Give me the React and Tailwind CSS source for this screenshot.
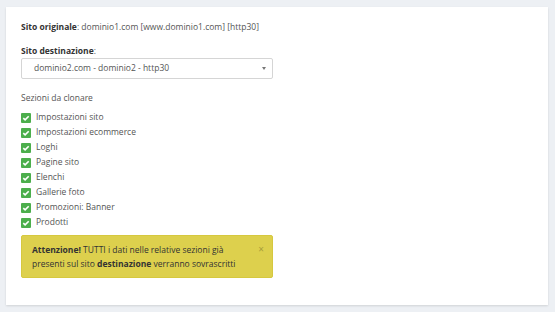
import React from 'react';

const SECTIONS = [
  'Impostazioni sito',
  'Impostazioni ecommerce',
  'Loghi',
  'Pagine sito',
  'Elenchi',
  'Gallerie foto',
  'Promozioni: Banner',
  'Prodotti',
];

function Check() {
  return (
    <span className="w-[10px] h-[10px] bg-[#4cae4c] rounded-[1px] flex items-center justify-center shrink-0">
      <svg width="8" height="8" viewBox="0 0 8 8" fill="none">
        <path d="M1.3 4.1 L3.1 5.8 L6.7 2.2" stroke="white" strokeWidth="1.6" />
      </svg>
    </span>
  );
}

export default function App() {
  return (
    <div className="w-[555px] h-[312px] bg-[#edf0f4] pt-[7px] pl-[6px]" style={{ fontFamily: '"Open Sans", sans-serif' }}>
      <div className="w-[542px] h-[298px] bg-white shadow-[0_1px_2px_rgba(0,0,0,0.12)] pl-[15px] pt-[13px] text-[8.5px] text-[#555]">
        <div className="leading-[14px]">
          <span className="font-bold text-[#333]">Sito originale</span>: dominio1.com [www.dominio1.com] [http30]
        </div>

        <div className="mt-[10px] leading-[14px]">
          <span className="font-bold text-[#333]">Sito destinazione</span>:
        </div>
        <div className="w-[252px] h-[21px] border border-[#d5d5d5] rounded-[2px] flex items-center justify-between pl-[12px] pr-[6px]">
          <span>dominio2.com - dominio2 - http30</span>
          <span className="w-0 h-0 border-l-[2.5px] border-r-[2.5px] border-t-[3px] border-l-transparent border-r-transparent border-t-[#777]" />
        </div>

        <div className="mt-[12px] leading-[14px]">Sezioni da clonare</div>

        <div className="mt-[5px] flex flex-col">
          {SECTIONS.map((s) => (
            <div key={s} className="h-[15px] flex items-center gap-[5px]">
              <Check />
              <span>{s}</span>
            </div>
          ))}
        </div>

        <div className="mt-[5px] w-[252px] h-[43px] bg-[#ddd04d] border border-[#d6c83f] rounded-[2px] pl-[10px] pr-[8px] pt-[7px] flex justify-between text-[#333]">
          <div className="leading-[14px]">
            <span className="font-bold">Attenzione!</span> TUTTI i dati nelle relative sezioni già
            <br />
            presenti sul sito <span className="font-bold">destinazione</span> verranno sovrascritti
          </div>
          <span className="text-[#a89e3a] text-[10px] leading-[12px]">×</span>
        </div>
      </div>
    </div>
  );
}
